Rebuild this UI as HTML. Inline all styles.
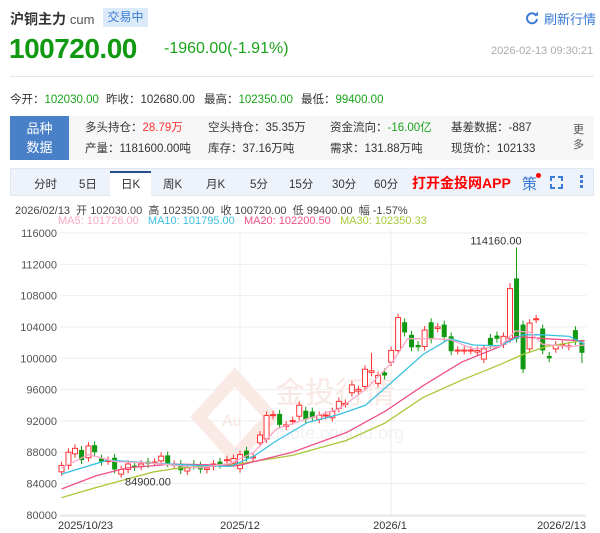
<!DOCTYPE html>
<html><head><meta charset="utf-8"><style>
*{margin:0;padding:0;box-sizing:border-box}
body{width:600px;height:533px;background:#fff;font-family:"Liberation Sans","Noto Sans CJK SC",sans-serif;position:relative;overflow:hidden;color:#333}
.a{position:absolute;white-space:nowrap}
.g{color:#1aa31a}
</style></head><body>
<div class="a" style="left:10px;top:9px;font-size:14px;font-weight:bold;color:#333">沪铜主力 <span style="font-weight:normal;color:#555;font-size:13px">cum</span></div>
<div class="a" style="left:103px;top:8px;width:45px;height:19px;background:#dbeaf8;color:#3a7bd5;font-size:12px;line-height:19px;text-align:center">交易中</div>
<svg class="a" style="left:525px;top:11px" width="14" height="14" viewBox="0 0 14 14"><path d="M11.5 5A5 5 0 1 0 12 8" fill="none" stroke="#3a7bd5" stroke-width="2"/><path d="M9 4.5h4v-4z" fill="#3a7bd5"/></svg>
<div class="a" style="left:544px;top:9px;font-size:13px;color:#3a7bd5">刷新行情</div>
<div class="a" style="left:9px;top:33px;font-size:28px;font-weight:bold;color:#119911;letter-spacing:-0.5px">100720.00</div>
<div class="a g" style="left:164px;top:40px;font-size:16px">-1960.00(-1.91%)</div>
<div class="a" style="left:491px;top:45px;font-size:11px;color:#aaa">2026-02-13 09:30:21</div>
<div class="a" style="left:10px;top:76px;width:584px;height:1px;background:#e8e8e8"></div>
<div class="a" style="left:10px;top:91px;font-size:11.5px;color:#333">今开：<span class="g">102030.00</span></div>
<div class="a" style="left:106px;top:91px;font-size:11.5px">昨收：102680.00</div>
<div class="a" style="left:204px;top:91px;font-size:11.5px">最高：<span class="g">102350.00</span></div>
<div class="a" style="left:301px;top:91px;font-size:11.5px">最低：<span class="g">99400.00</span></div>
<div class="a" style="left:10px;top:116px;width:584px;height:44px;background:#f7f7f7"></div>
<div class="a" style="left:10px;top:116px;width:59px;height:44px;background:#4a80c8;color:#fff;font-size:13px;line-height:19px;text-align:center;padding-top:3px">品种<br>数据</div>
<div class="a" style="left:85px;top:118px;font-size:11.5px;line-height:21px">多头持仓：<span style="color:#f33">28.79万</span><br>产量：1181600.00吨</div>
<div class="a" style="left:208px;top:118px;font-size:11.5px;line-height:21px">空头持仓：35.35万<br>库存：37.16万吨</div>
<div class="a" style="left:330px;top:118px;font-size:11.5px;line-height:21px">资金流向：<span class="g">-16.00亿</span><br>需求：131.88万吨</div>
<div class="a" style="left:451px;top:118px;font-size:11.5px;line-height:21px">基差数据：-887<br>现货价：102133</div>
<div class="a" style="left:573px;top:123px;font-size:11px;line-height:15px;color:#555">更<br>多</div>
<div class="a" style="left:10px;top:168px;width:584px;height:28px;background:#eef3fb;border:1px solid #e0e8f4"></div>
<div class="a" style="left:110px;top:171px;width:41px;height:26px;background:#fff;border-top:2px solid #2a4d8c"></div>
<div class="a" style="left:0;top:176px;font-size:11.5px;color:#333;width:600px;height:16px">
<span class="a" style="left:34px">分时</span><span class="a" style="left:79px">5日</span><span class="a" style="left:121px">日K</span><span class="a" style="left:163px">周K</span><span class="a" style="left:206px">月K</span><span class="a" style="left:250px">5分</span><span class="a" style="left:289px">15分</span><span class="a" style="left:332px">30分</span><span class="a" style="left:374px">60分</span></div>
<div class="a" style="left:412px;top:173px;font-size:14px;font-weight:bold;color:#f00">打开金投网APP</div>
<div class="a" style="left:522px;top:173px;font-size:15px;color:#3a7bd5">策</div>
<div class="a" style="left:536px;top:173px;width:5px;height:5px;border-radius:3px;background:#f00"></div>
<svg class="a" style="left:550px;top:176px" width="13" height="13"><path d="M1 5V1h4M8 1h4v4M12 8v4H8M5 12H1V8" fill="none" stroke="#3a7bd5" stroke-width="2"/></svg>
<div class="a" style="left:580px;top:175px;width:3px;height:3px;background:#3a7bd5;box-shadow:0 5px #3a7bd5,0 10px #3a7bd5"></div>
<div class="a" style="left:15px;top:202px;font-size:11px;color:#444">2026/02/13&nbsp; 开 102030.00&nbsp; 高 102350.00&nbsp; 收 100720.00&nbsp; 低 99400.00&nbsp; 幅 -1.57%</div>
<div class="a" style="left:58px;top:215px;font-size:11px"><span style="color:#f9a8c8">MA5: 101726.00</span>&nbsp;&nbsp; <span style="color:#3cc0e0">MA10: 101795.00</span>&nbsp;&nbsp; <span style="color:#f0508a">MA20: 102200.50</span>&nbsp;&nbsp; <span style="color:#a8c838">MA30: 102350.33</span></div>
<svg id="c" class="a" style="left:0;top:225px" width="600" height="308"></svg>
<script>
var s=document.getElementById('c'),h='',T=225,K=2.6;
function Y(p){return 233+(116-p)*7.83-T}
for(var v=80;v<=116;v+=4){var y=Y(v);h+='<line x1="60" x2="586" y1="'+y+'" y2="'+y+'" stroke="#eee"/>';h+='<text x="57" y="'+(y+4)+'" font-size="11" fill="#555" text-anchor="end" font-family="Liberation Sans">'+(v*1000)+'</text>'}
[240,391].forEach(function(x){h+='<line x1="'+x+'" x2="'+x+'" y1="5" y2="291" stroke="#eee"/>'});
h+='<line x1="60" x2="586" y1="291" y2="291" stroke="#ddd"/>';
h+='<text x="335" y="178" font-size="30" fill="#f8e8e4" text-anchor="middle" font-family="Noto Sans CJK SC">金投行情</text><text x="270" y="214" font-size="18" fill="#f2f2f2" font-family="Liberation Sans">quote.cngold.org</text><path d="M235 152l-36 40 36 40 36-40z" fill="none" stroke="#faeae6" stroke-width="13"/><text x="222" y="201" font-size="16" fill="#f8e4e0" font-family="Liberation Sans">Au</text>';
var d=[[160,85.5,86.3],[178,86.3,88],[195,87.8,88.5],[212,88.3,87],[230,87.3,88.8],[246,88.9,88],[264,87.2,86.8],[281,86.9,86.95],[298,87.3,85.8],[315,85.2,85.8],[333,85.8,86.5],[350,86.3,86.1],[367,86.2,86.5],[385,86.8,86.5],[402,86.7,86.75],[419,86.9,87.5],[436,87.6,86.6],[453,86.4,86.45],[470,86.5,85.7],[487,85.6,86],[504,86.5,86.3],[521,86.3,85.8],[538,85.8,86],[555,86.2,86.5],[572,86.8,86.4],[590,87,87.05],[607,86.6,87.2],[624,85.9,87.7],[641,88.2,87.3],[658,87.3,87.4],[676,89.2,90.2],[693,89.7,92.7],[710,92.7,92.8],[727,92.9,91.5],[744,91.3,91.5],[761,92,92.05],[778,92.6,94],[795,93.3,92.2],[812,93.2,92.4],[830,92.2,92.7],[847,92.7,92.75],[864,92.4,93.2],[881,93.6,94.5],[898,94.2,94.25],[915,95.6,96.6],[932,95.8,96],[949,96.4,98.6],[966,98.2,98.4,100.7],[983,96.8,97.8],[1000,98.2,97.8],[1017,99.5,101],[1035,101,105.2],[1052,104.6,103.3],[1070,103,101.4],[1087,101.7,101.4],[1104,101.5,103.6],[1121,104.6,102.4],[1138,103.8,104],[1155,104.3,102.7],[1173,102.8,100.9],[1190,101,101.05],[1207,101,101.05],[1224,101,101.05],[1241,100.8,101],[1258,99.9,101.2],[1275,102.6,101.7],[1292,102.9,102.5],[1309,101.8,102.8],[1326,102.5,108.9,109.6],[1343,110.2,102.5,114.16],[1360,104.3,98.6],[1377,101.2,104.5],[1394,105,105.05],[1411,103.8,101],[1428,100.3,100],[1445,101.2,101.7],[1462,101.7,101.75],[1479,101.5,101.6],[1496,103.6,102.2],[1513,102,100.7,102.35,99.4]];
d.forEach(function(c){var x=c[0]/K,o=c[1],cl=c[2],hi=c[3]||Math.max(o,cl)+0.5,lo=c[4]||Math.min(o,cl)-0.5,up=cl>=o,col=up?'#f33':'#119911';
h+='<line x1="'+x+'" x2="'+x+'" y1="'+Y(hi)+'" y2="'+Y(lo)+'" stroke="'+col+'"/>';
var t=Y(Math.max(o,cl)),b=Y(Math.min(o,cl));if(b-t<1)b=t+1;
h+='<rect x="'+(x-2.5)+'" y="'+t+'" width="5" height="'+(b-t)+'" fill="'+(up?'#fff':col)+'" stroke="'+col+'" stroke-width="'+(up?1:0)+'"/>'});
function L(p,col){h+='<polyline fill="none" stroke="'+col+'" stroke-width="1.3" points="'+p.map(function(q){return q[0]/K+','+Y(q[1])}).join(' ')+'"/>'}
L([[160,82.2],[250,83.5],[400,85.5],[470,86],[620,86.5],[760,87.6],[900,89.5],[1000,91.7],[1100,95],[1200,97.2],[1300,99.2],[1360,100.5],[1420,101.5],[1520,102.3]],'#a8c838');
L([[160,83.3],[250,85],[330,86],[450,86.5],[620,86.3],[760,88],[900,90.5],[1000,93.2],[1100,96.5],[1200,99.5],[1300,101.5],[1340,102.8],[1420,102.5],[1520,102.2]],'#f0508a');
L([[160,85.2],[280,87],[400,86.6],[520,86.3],[600,86.2],[660,87.5],[720,89.5],[800,91.8],[880,92.8],[950,94],[1020,97],[1100,100.5],[1170,102.5],[1230,101.7],[1300,101.6],[1360,103],[1410,103],[1480,102.8],[1520,101.8]],'#3cc0e0');
L([[160,86],[230,87.7],[300,86.8],[400,86.6],[520,86],[600,86.6],[660,88],[720,91],[800,92.3],[880,93.5],[950,96],[1020,99.5],[1060,102.5],[1120,102.5],[1170,102.4],[1230,101.2],[1300,101.5],[1340,103.5],[1380,103.3],[1410,101.8],[1480,101.5],[1520,101.7]],'#f9a8c8');
h+='<text x="496" y="'+(Y(114.16)-3)+'" font-size="11" fill="#333" text-anchor="middle" font-family="Liberation Sans">114160.00</text>';
h+='<text x="125" y="'+(Y(84.9)+9)+'" font-size="11" fill="#333" font-family="Liberation Sans">84900.00</text>';
[[58,'2025/10/23','start'],[240,'2025/12','middle'],[390,'2026/1','middle'],[586,'2026/2/13','end']].forEach(function(a){h+='<text x="'+a[0]+'" y="304" font-size="11" fill="#333" text-anchor="'+a[2]+'" font-family="Liberation Sans">'+a[1]+'</text>'});
s.innerHTML=h;
</script>
</body></html>
